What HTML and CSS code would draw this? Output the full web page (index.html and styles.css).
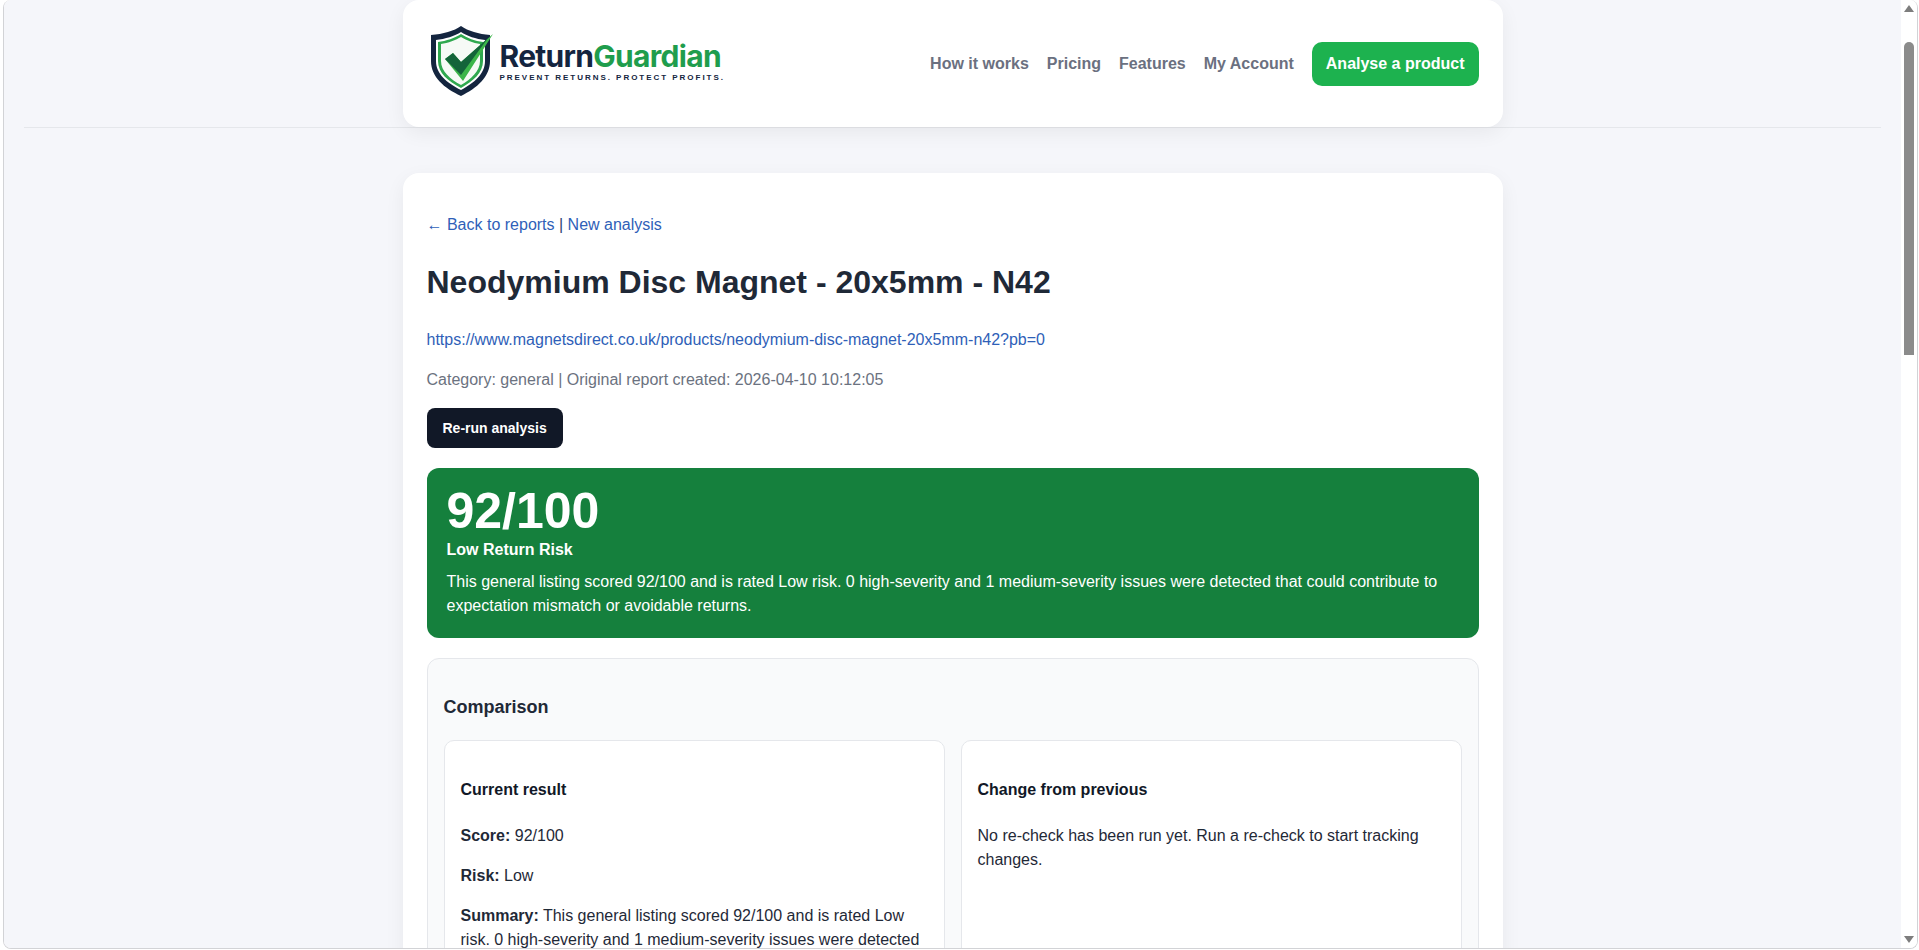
FILE: index.html
```html
<!DOCTYPE html>
<html lang="en">
<head>
    <meta charset="UTF-8">
    <title>Report - ReturnGuardian</title>
    <link rel="stylesheet" href="styles.css">
</head>
<body>
    <div class="window">
        <div class="page">
            <header class="site-header">
                <div class="header-card">
                    <a class="logo" href="#">
                        <svg class="logo-mark" width="64" height="72" viewBox="0 0 64 72">
                            <path d="M31 1 C24 6 13 9 1 10 L1 36 C1 52 14 63 31 71 C47 63 60 52 60 36 L60 10 C49 9 38 6 31 1 Z" fill="#14253f"/>
                            <path d="M31 7 C25 11 15 14 6 15 L6 36 C6 49 17 58 31 65 C44 58 55 49 55 36 L55 15 C46 14 37 11 31 7 Z" fill="#fff"/>
                            <path d="M31 9 C25 13 16 16 8 17 L8 36 C8 48 18 56 31 63 C43 56 53 48 53 36 L53 17 C45 16 37 13 31 9 Z" fill="#2fa84f"/>
                            <path d="M31 12 C26 15 18 18 11 19 L11 36 C11 46 20 54 31 60 C41 54 50 46 50 36 L50 19 C43 18 36 15 31 12 Z" fill="#f6faf6"/>
                            <path d="M15 34 L23 28 L31 37 L63 9 L33 56 Z" fill="#3cb54a"/>
                            <path d="M15 34 L23 28 L31 37 L58 13 L31 50 Z" fill="#14643a"/>
                        </svg>
                        <span class="logo-text">
                            <span class="logo-name">Return<em>Guardian</em></span>
                            <span class="logo-tag">PREVENT RETURNS. PROTECT PROFITS.</span>
                        </span>
                    </a>
                    <nav class="main-nav">
                        <a href="#">How it works</a>
                        <a href="#">Pricing</a>
                        <a href="#">Features</a>
                        <a href="#">My Account</a>
                        <a class="nav-cta" href="#">Analyse a product</a>
                    </nav>
                </div>
            </header>

            <main class="report-card">
                <p class="back-links"><a href="#">&larr; Back to reports</a> | <a href="#">New analysis</a></p>
                <h1>Neodymium Disc Magnet - 20x5mm - N42</h1>
                <p class="source-link"><a href="#">https://www.magnetsdirect.co.uk/products/neodymium-disc-magnet-20x5mm-n42?pb=0</a></p>
                <p class="meta">Category: general | Original report created: 2026-04-10 10:12:05</p>
                <button class="rerun-btn">Re-run analysis</button>

                <section class="score-panel">
                    <div class="score">92/100</div>
                    <div class="risk-label">Low Return Risk</div>
                    <p>This general listing scored 92/100 and is rated Low risk. 0 high-severity and 1 medium-severity issues were detected that could contribute to expectation mismatch or avoidable returns.</p>
                </section>

                <section class="comparison">
                    <h2>Comparison</h2>
                    <div class="compare-grid">
                        <div class="compare-box">
                            <h3>Current result</h3>
                            <p><strong>Score:</strong> 92/100</p>
                            <p><strong>Risk:</strong> Low</p>
                            <p><strong>Summary:</strong> This general listing scored 92/100 and is rated Low risk. 0 high-severity and 1 medium-severity issues were detected that could contribute to expectation mismatch or avoidable returns.</p>
                        </div>
                        <div class="compare-box">
                            <h3>Change from previous</h3>
                            <p>No re-check has been run yet. Run a re-check to start tracking changes.</p>
                        </div>
                    </div>
                </section>
            </main>
        </div>
        <div class="scrollbar">
            <span class="scroll-arrow"></span>
            <span class="scroll-thumb"></span>
            <span class="scroll-arrow down"></span>
        </div>
    </div>
</body>
</html>
```

FILE: styles.css
```css
* {
    box-sizing: border-box;
}

html, body {
    height: 100%;
    margin: 0;
    overflow: hidden;
}

body {
    font-family: "Liberation Sans", Arial, sans-serif;
    background-color: #fff;
    color: #1f2937;
    font-size: 16px;
    padding: 0 1px 1px 3px;
}

a {
    color: #2f5fb8;
    text-decoration: none;
}

/* browser frame, page plus scrollbar */
.window {
    height: 100%;
    display: flex;
    border: 1px solid #d2d3d6;
    border-top: none;
    border-radius: 8px;
    overflow: hidden;
}

.page {
    flex: 1;
    min-width: 0;
    height: 100%;
    overflow: hidden;
    background-color: #f5f6fa;
}

.scrollbar {
    width: 16px;
    flex-shrink: 0;
    background-color: #fff;
    padding-left: 3px;
    display: flex;
    flex-direction: column;
    align-items: flex-start;
}

.scroll-arrow {
    margin-top: 5px;
    border-left: 5px solid transparent;
    border-right: 5px solid transparent;
    border-bottom: 7px solid #7d7d7d;
}

.scroll-arrow.down {
    margin-top: auto;
    margin-bottom: 5px;
    border-bottom: none;
    border-top: 7px solid #7d7d7d;
}

.scroll-thumb {
    width: 10px;
    height: 313px;
    margin-top: 30px;
    background-color: #8b8b8b;
    border-radius: 5px 5px 0 0;
}

.site-header {
    margin: 0 20px;
    border-bottom: 1px solid #e5e7eb;
    display: flex;
    justify-content: center;
}

.header-card {
    width: 1100px;
    height: 127px;
    background-color: #fff;
    border-radius: 16px;
    box-shadow: 0 6px 20px rgba(0, 0, 0, 0.06);
    padding: 0 24px 0 27px;
    display: flex;
    justify-content: space-between;
    align-items: center;
}

.logo {
    display: flex;
    align-items: center;
    gap: 6px;
    margin-top: -6px;
}

.logo-text {
    display: flex;
    flex-direction: column;
    margin-top: 2px;
}

.logo-name {
    font-family: Inter, sans-serif;
    font-size: 30px;
    font-weight: 700;
    letter-spacing: -0.7px;
    line-height: 32px;
    color: #14253f;
}

.logo-name em {
    font-style: normal;
    color: #1f9d4d;
}

.logo-tag {
    font-size: 8px;
    font-weight: 700;
    letter-spacing: 1.97px;
    line-height: 11px;
    white-space: nowrap;
    color: #14253f;
}

.main-nav {
    display: flex;
    align-items: center;
    gap: 18px;
}

.main-nav a {
    color: #6b7080;
    font-weight: 700;
}

.main-nav .nav-cta {
    background-color: #1db24f;
    color: #fff;
    padding: 13px 14px;
    border-radius: 10px;
}

.report-card {
    width: 1100px;
    margin: 45px auto 0;
    background-color: #fff;
    border-radius: 16px;
    box-shadow: 0 6px 20px rgba(0, 0, 0, 0.06);
    padding: 24px;
}

.back-links {
    margin: 19px 0 0;
    line-height: 18px;
    color: #33476f;
}

h1 {
    margin: 30px 0 0;
    font-size: 32px;
    line-height: 37px;
    color: #1f2937;
}

.source-link {
    margin: 30px 0 0;
    line-height: 18px;
}

.meta {
    margin: 22px 0 0;
    line-height: 18px;
    color: #6b7280;
}

.rerun-btn {
    display: block;
    margin-top: 19px;
    height: 40px;
    padding: 0 16px;
    background-color: #111827;
    color: #fff;
    border: none;
    border-radius: 8px;
    font-family: inherit;
    font-size: 14px;
    font-weight: 700;
}

.score-panel {
    margin-top: 20px;
    background-color: #15803d;
    color: #fff;
    border-radius: 12px;
    padding: 20px;
}

.score {
    font-size: 50px;
    font-weight: 700;
    line-height: 47px;
}

.risk-label {
    margin-top: 6px;
    font-weight: 700;
    line-height: 18px;
}

.score-panel p {
    margin: 11px 0 0;
    line-height: 24px;
}

.comparison {
    margin-top: 20px;
    background-color: #f9fafb;
    border: 1px solid #e5e7eb;
    border-radius: 12px;
    padding: 16px;
}

h2 {
    margin: 22px 0 0;
    font-size: 18px;
    line-height: 21px;
}

.compare-grid {
    display: grid;
    grid-template-columns: 1fr 1fr;
    gap: 16px;
    margin-top: 22px;
}

.compare-box {
    background-color: #fff;
    border: 1px solid #e5e7eb;
    border-radius: 10px;
    padding: 16px;
    line-height: 24px;
}

h3 {
    margin: 24px 0 0;
    font-size: 16px;
    line-height: 18px;
    color: #111827;
}

.compare-box p {
    margin: 16px 0 0;
}

.compare-box h3 + p {
    margin-top: 25px;
}
```
